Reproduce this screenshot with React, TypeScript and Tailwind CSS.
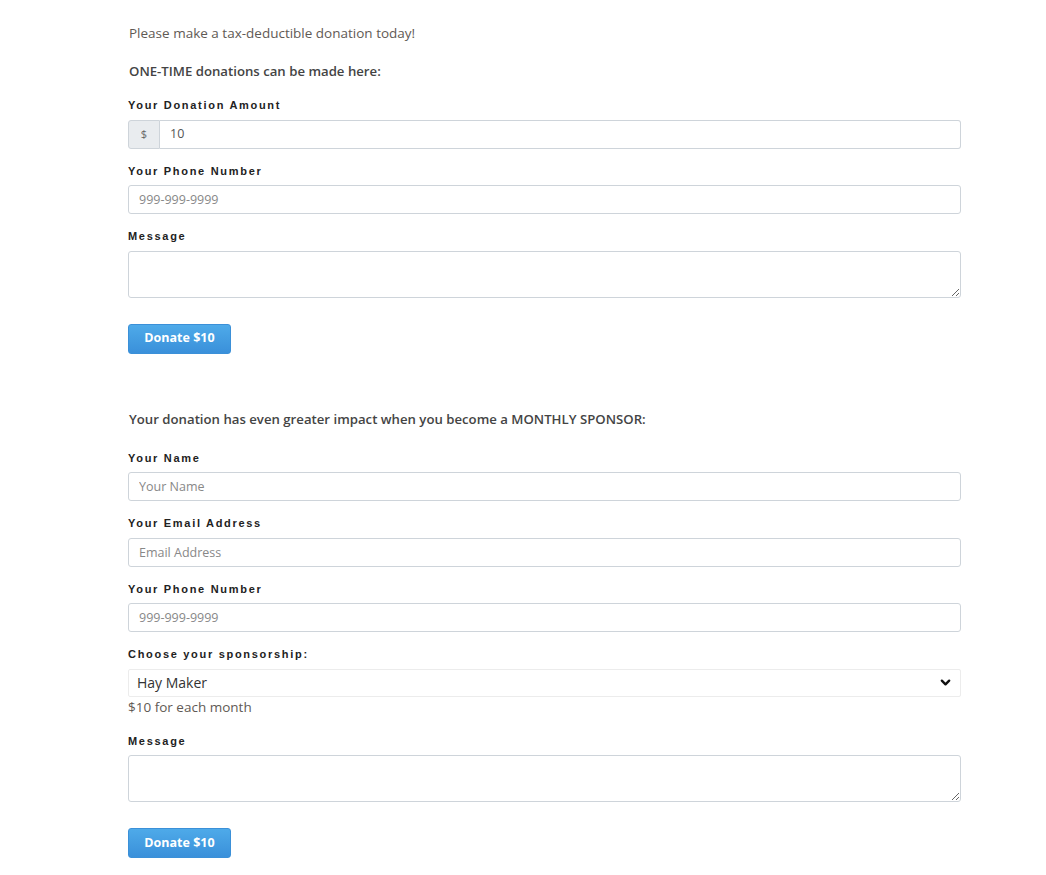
import React, { useState } from 'react';

const body = "font-['Open_Sans',_'Noto_Sans',_sans-serif]";

const Label = ({ children }: { children: React.ReactNode }) => (
  <label className="block font-['Liberation_Sans',_Arial,_sans-serif] text-[11px] leading-[16px] font-bold tracking-[1.7px] text-[#222] mb-[6.5px]">
    {children}
  </label>
);

const inputCls =
  "block w-full h-[29px] px-[10px] border border-[#ced4da] rounded-[3px] text-[12.5px] text-[#555] placeholder:text-[#888] outline-none bg-white";

const DonateButton = ({ amount }: { amount: string }) => (
  <button className="h-[30px] w-[103px] rounded-[3px] border border-[#3b90d8] bg-gradient-to-b from-[#4eaae9] to-[#3a90da] text-white text-[12.5px] font-bold">
    Donate ${amount}
  </button>
);

export default function App() {
  const [amount, setAmount] = useState('10');
  const [plan, setPlan] = useState('hay');

  return (
    <div className={`${body} min-h-screen bg-white text-[#555]`}>
      <div className="w-[833px] ml-[128px] pt-[23px] pb-[20px]">
        <p className="pl-[1px] text-[13.5px] leading-[20px] text-[#5f5a55]">
          Please make a tax-deductible donation today!
        </p>
        <p className="pl-[1px] mt-[18px] text-[13.2px] leading-[20px] font-semibold text-[#444]">
          ONE-TIME donations can be made here:
        </p>

        <div className="mt-[16px]">
          <Label>Your Donation Amount</Label>
          <div className="flex h-[29px]">
            <span className="w-[32px] flex items-center justify-center bg-[#e9ecef] border border-[#ced4da] rounded-l-[3px] text-[11px] text-[#666]">
              $
            </span>
            <input
              className="flex-1 px-[10px] border border-l-0 border-[#ced4da] rounded-r-[3px] text-[12.5px] text-[#555] outline-none"
              value={amount}
              onChange={e => setAmount(e.target.value)}
            />
          </div>
        </div>

        <div className="mt-[14px]">
          <Label>Your Phone Number</Label>
          <input className={inputCls} placeholder="999-999-9999" />
        </div>

        <div className="mt-[14px]">
          <Label>Message</Label>
          <textarea className="block w-full h-[47px] px-[10px] py-[6px] border border-[#ced4da] rounded-[3px] outline-none text-[13px]" />
        </div>

        <div className="mt-[26px]">
          <DonateButton amount="10" />
        </div>

        <p className="pl-[1px] mt-[55px] text-[13.2px] leading-[20px] font-semibold text-[#444]">
          Your donation has even greater impact when you become a MONTHLY SPONSOR:
        </p>

        <div className="mt-[21px]">
          <Label>Your Name</Label>
          <input className={inputCls} placeholder="Your Name" />
        </div>

        <div className="mt-[14px]">
          <Label>Your Email Address</Label>
          <input className={inputCls} placeholder="Email Address" />
        </div>

        <div className="mt-[14px]">
          <Label>Your Phone Number</Label>
          <input className={inputCls} placeholder="999-999-9999" />
        </div>

        <div className="mt-[14px]">
          <Label>Choose your sponsorship:</Label>
          <div className="relative">
            <select
              className="block w-full h-[28px] pl-[8px] pr-[28px] appearance-none border border-[#ececec] rounded-[2px] bg-white text-[14px] text-[#333] outline-none"
              value={plan}
              onChange={e => setPlan(e.target.value)}
            >
              <option value="hay">Hay Maker</option>
              <option value="barn">Barn Builder</option>
              <option value="field">Field Friend</option>
            </select>
            <svg className="absolute right-[10px] top-[9px] pointer-events-none" width="11" height="9" viewBox="0 0 12 9" fill="none" stroke="#111" strokeWidth="2.6" strokeLinecap="round" strokeLinejoin="round">
              <polyline points="2 2.5 6 6.5 10 2.5" />
            </svg>
          </div>
          <p className="text-[13.5px] leading-[20px] text-[#5f5a55]">$10 for each month</p>
        </div>

        <div className="mt-[16px]">
          <Label>Message</Label>
          <textarea className="block w-full h-[47px] px-[10px] py-[6px] border border-[#ced4da] rounded-[3px] outline-none text-[13px]" />
        </div>

        <div className="mt-[26px]">
          <DonateButton amount="10" />
        </div>
      </div>
    </div>
  );
}
